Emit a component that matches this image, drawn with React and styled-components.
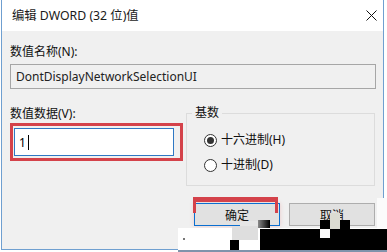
import React from "react";
import styled, { createGlobalStyle } from "styled-components";

const GlobalStyle = createGlobalStyle`
  html, body {
    margin: 0;
    padding: 0;
    background: #ffffff;
  }
  body {
    font-family: "Noto Sans", "Noto Sans CJK SC", sans-serif;
    font-size: 12px;
    color: #000;
  }
`;

const Page = styled.div`
  position: relative;
  width: 387px;
  height: 252px;
  overflow: hidden;
`;

const Window = styled.div`
  margin-left: 1px;
  width: 383px;
  height: 250px;
  box-sizing: border-box;
  border: 1px solid #6f9fd0;
  border-top: none;
  display: flex;
  flex-direction: column;
`;

const TitleBar = styled.div`
  height: 31px;
  flex: none;
  background: #ffffff;
  display: flex;
  align-items: center;
  justify-content: space-between;
  padding-left: 10px;
`;

const Title = styled.span`
  font-size: 12.3px;
  line-height: 16px;
  color: #1a1a1a;
`;

const CloseBox = styled.div`
  width: 24px;
  height: 31px;
  display: flex;
  align-items: center;
  justify-content: center;
`;

const Body = styled.div`
  flex: 1;
  background: #f0f0f0;
  padding: 13px 7px 0 8px;
  display: flex;
  flex-direction: column;
`;

const Label = styled.div`
  font-size: 12px;
  line-height: 16px;
  height: 16px;
  color: #111;
`;

const NameBox = styled.div`
  margin-top: 4px;
  height: 25px;
  box-sizing: border-box;
  border: 1px solid #a6a6a6;
  background: #f0f0f0;
  padding-left: 5px;
  display: flex;
  align-items: center;
  font-size: 12px;
  color: #222;
`;

const Middle = styled.div`
  display: grid;
  grid-template-columns: 173px 189px;
  column-gap: 3px;
  margin-top: 17px;
`;

const DataColumn = styled.div`
  display: flex;
  flex-direction: column;
`;

const Highlight = styled.div`
  margin-top: 1px;
  border: 3px solid #d4424a;
  padding: 2px 6px 2px 1px;
`;

const ValueInput = styled.div`
  height: 28px;
  box-sizing: border-box;
  border: 1px solid #2f78c4;
  background: #fff;
  padding-left: 4px;
  display: flex;
  align-items: center;
  font-size: 12px;
`;

const Caret = styled.span`
  display: inline-block;
  width: 1px;
  height: 15px;
  background: #000;
  margin-left: 2px;
`;

const Group = styled.fieldset`
  margin: 0;
  padding: 0 0 0 17px;
  border: 1px solid #dcdcdc;
  height: 80px;
  box-sizing: border-box;
  min-width: 0;
`;

const Legend = styled.legend`
  font-size: 12px;
  line-height: 14px;
  padding: 0 3px;
  margin-left: -12px;
  color: #111;
`;

const RadioRow = styled.div`
  display: flex;
  align-items: center;
  gap: 4px;
  height: 16px;
  margin-top: ${(p) => p.$top}px;
  font-size: 12px;
  line-height: 16px;
  color: #111;
`;

const RadioCircle = styled.span`
  width: 13px;
  height: 13px;
  box-sizing: border-box;
  border-radius: 50%;
  border: 1px solid #333;
  background: #fff;
  display: flex;
  align-items: center;
  justify-content: center;
  &::after {
    content: "";
    width: 7px;
    height: 7px;
    border-radius: 50%;
    background: ${(p) => (p.$checked ? "#333" : "transparent")};
  }
`;

const Buttons = styled.div`
  display: flex;
  justify-content: flex-end;
  gap: 9px;
  margin-top: 17px;
  margin-right: 1px;
`;

const Button = styled.div`
  width: 86px;
  height: 23px;
  box-sizing: border-box;
  background: #e1e1e1;
  border: 1px solid ${(p) => (p.$primary ? "#0b6fd0" : "#adadad")};
  display: flex;
  align-items: center;
  justify-content: center;
  font-size: 12px;
  color: #111;
  box-shadow: ${(p) => (p.$primary ? "0 0 4px rgba(230, 120, 120, 0.35)" : "none")};
`;

const Marker = styled.div`
  position: absolute;
  left: 193px;
  top: 197px;
  width: 85px;
  height: 16px;
  box-sizing: border-box;
  border: 3px solid #d4424a;
  border-top-width: 5px;
  border-bottom: none;
`;

const Block = styled.div`
  position: absolute;
  left: ${(p) => p.$x}px;
  top: ${(p) => p.$y}px;
  width: ${(p) => p.$w}px;
  height: ${(p) => p.$h}px;
  background: ${(p) => p.$c};
`;

const blocks = [
  { x: 377, y: 198, w: 10, h: 30, c: "#fbfbfb" },
  { x: 240, y: 221, w: 18, h: 7, c: "#e6e6e6" },
  { x: 178, y: 228, w: 209, h: 22, c: "#ffffff" },
  { x: 232, y: 226, w: 26, h: 14, c: "#dedede" },
  { x: 258, y: 220, w: 12, h: 8, c: "linear-gradient(90deg, #8a8a8a, #000)" },
  { x: 260, y: 229, w: 127, h: 21, c: "#000" },
  { x: 230, y: 240, w: 9, h: 10, c: "#000" },
  { x: 320, y: 220, w: 10, h: 9, c: "#000" },
  { x: 330, y: 213, w: 10, h: 16, c: "#dcdcd2" },
  { x: 340, y: 220, w: 10, h: 9, c: "#000" },
  { x: 320, y: 229, w: 10, h: 9, c: "#fafafa" },
  { x: 183, y: 238, w: 2, h: 2, c: "#777" },
  { x: 178, y: 250, w: 209, h: 2, c: "#7f93ab" },
];

const CloseIcon = () => (
  <svg width="11" height="11" viewBox="0 0 11 11">
    <path d="M0.5 0.5 L10.5 10.5 M10.5 0.5 L0.5 10.5" stroke="#111" strokeWidth="1" fill="none" />
  </svg>
);

export default function App() {
  return (
    <Page>
      <GlobalStyle />
      <Window>
        <TitleBar>
          <Title>编辑 DWORD (32 位)值</Title>
          <CloseBox>
            <CloseIcon />
          </CloseBox>
        </TitleBar>
        <Body>
          <Label>数值名称(N):</Label>
          <NameBox>DontDisplayNetworkSelectionUI</NameBox>
          <Middle>
            <DataColumn>
              <Label>数值数据(V):</Label>
              <Highlight>
                <ValueInput>
                  1<Caret />
                </ValueInput>
              </Highlight>
            </DataColumn>
            <Group>
              <Legend>基数</Legend>
              <RadioRow $top={12}>
                <RadioCircle $checked />
                十六进制(H)
              </RadioRow>
              <RadioRow $top={9}>
                <RadioCircle />
                十进制(D)
              </RadioRow>
            </Group>
          </Middle>
          <Buttons>
            <Button $primary>确定</Button>
            <Button>取消</Button>
          </Buttons>
        </Body>
      </Window>
      <Marker />
      {blocks.map((b, i) => (
        <Block key={i} $x={b.x} $y={b.y} $w={b.w} $h={b.h} $c={b.c} />
      ))}
    </Page>
  );
}
